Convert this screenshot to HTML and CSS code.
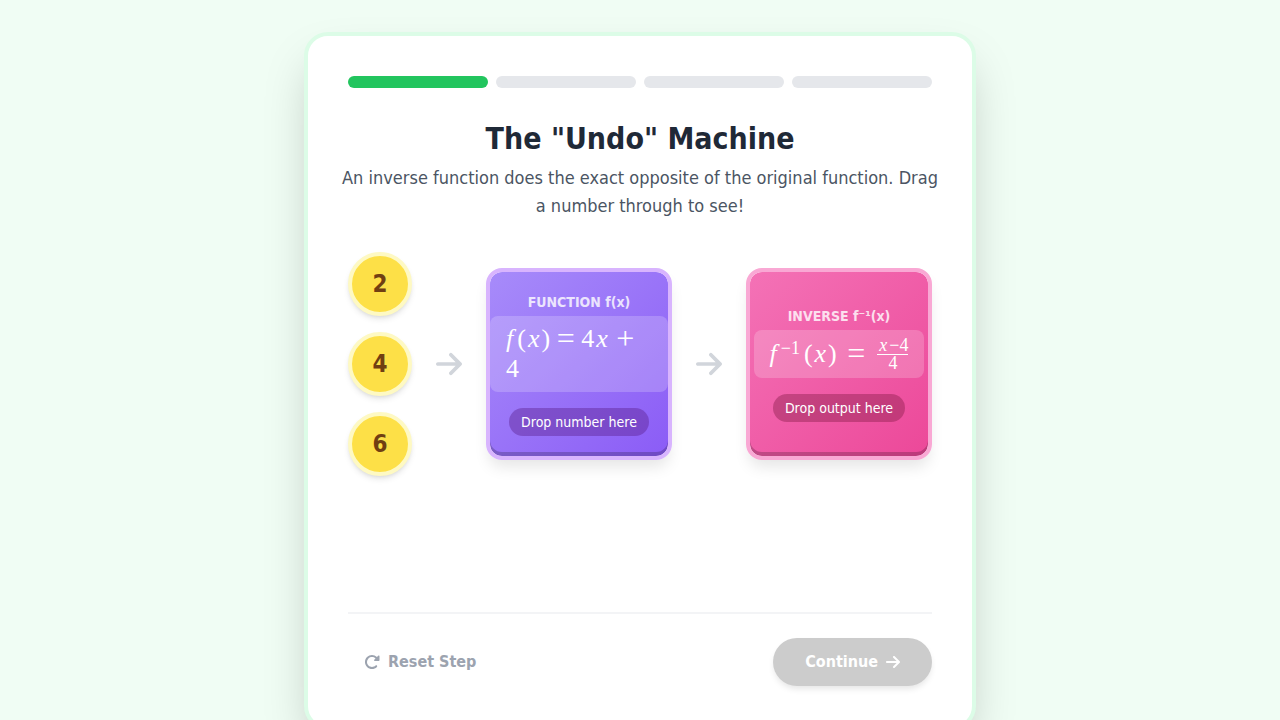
FILE: index.html
```html
<!DOCTYPE html>
<html lang="en">
<head>
    <meta charset="UTF-8">
    <meta name="viewport" content="width=device-width, initial-scale=1.0">
    <title>The "Undo" Machine</title>
    <link rel="stylesheet" href="styles.css">
</head>
<body>
    <svg class="sprite" aria-hidden="true">
        <symbol id="icon-arrow" viewBox="0 0 448 512">
            <path d="M438.6 278.6c12.5-12.5 12.5-32.8 0-45.3l-160-160c-12.5-12.5-32.8-12.5-45.3 0s-12.5 32.8 0 45.3L338.8 224 32 224c-17.7 0-32 14.3-32 32s14.3 32 32 32l306.7 0L233.4 393.4c-12.5 12.5-12.5 32.8 0 45.3s32.8 12.5 45.3 0l160-160z"/>
        </symbol>
        <symbol id="icon-rotate" viewBox="0 0 512 512">
            <path d="M463.5 224H472c13.3 0 24-10.7 24-24V72c0-9.7-5.8-18.5-14.8-22.2s-19.3-1.7-26.2 5.2L413.4 96.6c-87.6-86.5-228.7-86.2-315.8 1c-87.5 87.5-87.5 229.3 0 316.8s229.3 87.5 316.8 0c12.5-12.5 12.5-32.8 0-45.3s-32.8-12.5-45.3 0c-62.5 62.5-163.8 62.5-226.3 0s-62.5-163.8 0-226.3c62.2-62.2 162.7-62.5 225.3-1L327 183c-6.9 6.9-8.9 17.2-5.2 26.2s12.5 14.8 22.2 14.8H463.5z"/>
        </symbol>
    </svg>

    <main class="card">
        <div class="progress">
            <div class="progress-step active"></div>
            <div class="progress-step"></div>
            <div class="progress-step"></div>
            <div class="progress-step"></div>
        </div>

        <section class="step">
            <h1 class="step-title">The "Undo" Machine</h1>
            <p class="step-text">An inverse function does the exact opposite of the original function. Drag a number through to see!</p>

            <div class="flow">
                <div class="numbers">
                    <button class="number" draggable="true">2</button>
                    <button class="number" draggable="true">4</button>
                    <button class="number" draggable="true">6</button>
                </div>
                <svg class="flow-arrow"><use href="#icon-arrow"/></svg>
                <div class="machine machine-function">
                    <h2 class="machine-label">FUNCTION f(x)</h2>
                    <div class="formula"><i class="f">f</i>(<i>x</i>) <span class="op">=</span> 4<i>x</i> <span class="op">+</span> 4</div>
                    <div class="drop-hint">Drop number here</div>
                </div>
                <svg class="flow-arrow"><use href="#icon-arrow"/></svg>
                <div class="machine machine-inverse">
                    <h2 class="machine-label">INVERSE f⁻¹(x)</h2>
                    <div class="formula formula-inverse">
                        <span><i class="f">f</i><sup>−1</sup>(<i>x</i>) <span class="op">=</span></span>
                        <span class="fraction"><span class="numerator"><i>x</i>−4</span><span>4</span></span>
                    </div>
                    <div class="drop-hint">Drop output here</div>
                </div>
            </div>
        </section>

        <footer class="actions">
            <button class="reset-btn"><svg class="icon-reset"><use href="#icon-rotate"/></svg>Reset Step</button>
            <button class="continue-btn" disabled>Continue<svg class="icon-next"><use href="#icon-arrow"/></svg></button>
        </footer>
    </main>
</body>
</html>
```
FILE: styles.css
```css
* {
    box-sizing: border-box;
}
body {
    font-family: Tahoma, "DejaVu Sans Condensed", sans-serif;
    margin: 0;
    padding: 32px 16px;
    background-color: #f0fdf4;
    color: #1f2937;
}
button {
    font-family: inherit;
    border: none;
    cursor: pointer;
}
svg {
    fill: currentColor;
    flex-shrink: 0;
}
.sprite {
    display: none;
}
.card {
    max-width: 672px;
    margin: 0 auto;
    padding: 40px;
    background: #fff;
    border: 4px solid #dcfce7;
    border-radius: 24px;
    box-shadow: 0 25px 50px -12px rgba(0,0,0,0.25);
}
.progress {
    display: flex;
    gap: 8px;
    margin-bottom: 32px;
}
.progress-step {
    flex: 1;
    height: 12px;
    border-radius: 6px;
    background: #e5e7eb;
}
.progress-step.active {
    background: #22c55e;
}
.step {
    min-height: 460px;
    text-align: center;
}
.step-title {
    font-size: 30px;
    line-height: 38px;
    font-weight: bold;
    margin: 0 0 6px;
}
.step-text {
    font-size: 18px;
    line-height: 28px;
    color: #4b5563;
    margin: 0 -8px 32px;
}
.flow {
    display: flex;
    align-items: center;
    gap: 24px;
}
.numbers {
    display: flex;
    flex-direction: column;
    gap: 16px;
}
.number {
    width: 64px;
    height: 64px;
    padding: 0;
    border: 4px solid #fef9c3;
    border-radius: 50%;
    background: #fde047;
    color: #713f12;
    font-size: 24px;
    font-weight: bold;
    box-shadow: 0 4px 6px -1px rgba(0,0,0,0.1), 0 2px 4px -2px rgba(0,0,0,0.1);
    cursor: grab;
}
.flow-arrow {
    width: 26px;
    height: 30px;
    color: #d1d5db;
}
.machine {
    flex: 1;
    min-width: 0;
    height: 192px;
    display: flex;
    flex-direction: column;
    align-items: center;
    justify-content: center;
    border: 4px solid;
    border-radius: 16px;
    color: #fff;
    box-shadow: 0 10px 15px -3px rgba(0,0,0,0.1), inset 0 -4px 0 rgba(0,0,0,0.2);
}
.machine-function {
    border-color: #d8b4fe;
    background: linear-gradient(135deg, #a78bfa, #8b5cf6) padding-box;
}
.machine-inverse {
    border-color: #f9a8d4;
    background: linear-gradient(135deg, #f472b6, #ec4899) padding-box;
}
.machine-label {
    font-size: 14px;
    line-height: 20px;
    font-weight: bold;
    margin: 0 0 4px;
    opacity: 0.8;
}
.formula {
    padding: 8px 16px;
    border-radius: 8px;
    background: rgba(255,255,255,0.2);
    font-family: "Liberation Serif", serif;
    font-size: 26px;
    line-height: 30px;
    text-align: left;
}
.formula i {
    padding: 0 2px;
}
.formula .f {
    padding: 0 4px 0 0;
}
.formula .op {
    font-size: 32px;
    line-height: 24px;
    vertical-align: -2px;
}
.formula sup {
    padding-right: 4px;
    font-size: 18px;
    line-height: 12px;
    vertical-align: 8px;
}
.formula-inverse {
    display: flex;
    align-items: center;
    gap: 12px;
    height: 48px;
    white-space: nowrap;
}
.formula-inverse .op {
    padding-left: 4px;
}
.fraction {
    display: flex;
    flex-direction: column;
    font-size: 18px;
    line-height: 17px;
    text-align: center;
}
.numerator {
    border-bottom: 1px solid #fff;
}
.drop-hint {
    margin-top: 16px;
    padding: 4px 12px;
    border-radius: 14px;
    font-size: 14px;
    line-height: 20px;
    white-space: nowrap;
}
.machine-function .drop-hint {
    background: rgba(88,28,135,0.4);
}
.machine-inverse .drop-hint {
    background: rgba(131,24,67,0.4);
}
.actions {
    display: flex;
    align-items: center;
    justify-content: space-between;
    margin-top: 32px;
    padding-top: 24px;
    border-top: 2px solid #f3f4f6;
}
.actions button {
    display: flex;
    align-items: center;
    gap: 8px;
    font-size: 16px;
    line-height: 24px;
    font-weight: bold;
}
.reset-btn {
    padding: 8px 16px;
    background: none;
    color: #9ca3af;
}
.continue-btn {
    padding: 12px 32px;
    border-radius: 24px;
    background: #ccc;
    color: #fff;
    box-shadow: 0 4px 6px -1px rgba(0,0,0,0.1);
}
.continue-btn:disabled {
    cursor: not-allowed;
}
.icon-reset {
    width: 16px;
    height: 16px;
}
.icon-next {
    width: 14px;
    height: 16px;
}
```
